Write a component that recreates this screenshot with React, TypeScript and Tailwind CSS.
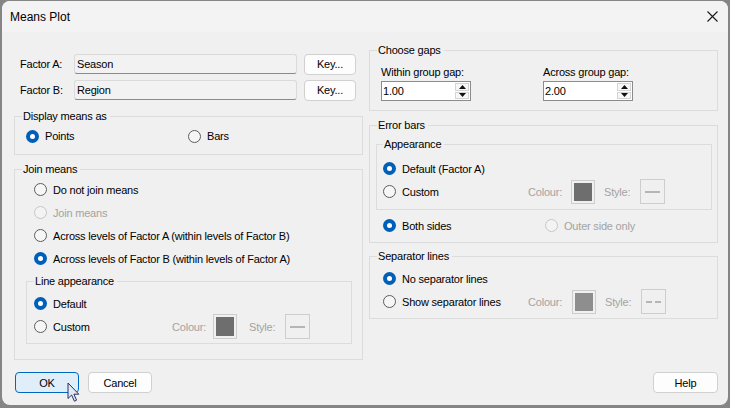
import React from "react";

function Radio({ checked = false, disabled = false }: { checked?: boolean; disabled?: boolean }) {
  if (checked) {
    return (
      <span className="w-[13px] h-[13px] shrink-0 rounded-full bg-[#005fb8] flex items-center justify-center">
        <span className="w-[5px] h-[5px] rounded-full bg-white" />
      </span>
    );
  }
  return (
    <span
      className={
        disabled
          ? "w-[13px] h-[13px] shrink-0 rounded-full border border-[#c6c6c6] bg-[#f3f3f3]"
          : "w-[13px] h-[13px] shrink-0 rounded-full border border-[#5c5c5c] bg-[#f6f6f6]"
      }
    />
  );
}

function RadioItem({
  label,
  checked = false,
  disabled = false,
  className = "",
}: {
  label: string;
  checked?: boolean;
  disabled?: boolean;
  className?: string;
}) {
  return (
    <div className={"flex items-center gap-[6px] " + className}>
      <Radio checked={checked} disabled={disabled} />
      <span className={disabled ? "text-[#a3a3a3]" : "text-black"}>{label}</span>
    </div>
  );
}

function Swatch({ color, h }: { color: string; h: string }) {
  return (
    <div className={"w-[24px] border border-[#cdcdcd] p-[2px] bg-[#f0f0f0] " + h}>
      <div className="w-full h-full" style={{ background: color }} />
    </div>
  );
}

function StyleBox({ dashed = false }: { dashed?: boolean }) {
  return (
    <div className="w-[25px] h-[25px] border border-[#cdcdcd] flex items-center justify-center">
      {dashed ? (
        <div className="flex gap-[3px]">
          <div className="w-[6px] h-[2px] bg-[#b5b5b5]" />
          <div className="w-[6px] h-[2px] bg-[#b5b5b5]" />
        </div>
      ) : (
        <div className="w-[15px] h-[2px] bg-[#b5b5b5]" />
      )}
    </div>
  );
}

function SpinBox({ value }: { value: string }) {
  return (
    <div className="w-[90px] h-[20px] border border-[#8c8c8c] bg-white flex">
      <div className="flex-1 pl-[1px] flex items-center">{value}</div>
      <div className="w-[15px] flex flex-col py-[1px] pr-[1px] gap-[1px]">
        <div className="flex-1 border border-[#d4d4d4] bg-[#f7f7f7] flex items-center justify-center">
          <svg width="7" height="4" viewBox="0 0 7 4">
            <path d="M0 4 L3.5 0 L7 4 Z" fill="#111" />
          </svg>
        </div>
        <div className="flex-1 border border-[#d4d4d4] bg-[#f7f7f7] flex items-center justify-center">
          <svg width="7" height="4" viewBox="0 0 7 4">
            <path d="M0 0 L3.5 4 L7 0 Z" fill="#111" />
          </svg>
        </div>
      </div>
    </div>
  );
}

function Legend({ children, ml = "ml-[7px]" }: { children: React.ReactNode; ml?: string }) {
  return <legend className={"px-[1px] pr-[3px] leading-[14px] " + ml}>{children}</legend>;
}

function Btn({ children, w = "w-[64px]", primary = false }: { children: React.ReactNode; w?: string; primary?: boolean }) {
  return (
    <div
      className={
        primary
          ? "h-[21px] rounded-[4px] border border-[#0067c0] bg-[#e0eef9] flex items-center justify-center " + w
          : "h-[21px] rounded-[4px] border border-[#d0d0d0] bg-[#fdfdfd] flex items-center justify-center " + w
      }
    >
      {children}
    </div>
  );
}

export default function App() {
  return (
    <div className="relative w-[730px] h-[408px] bg-[#858585] pt-[1px] pl-[2px] pr-[2px] pb-[3px] font-['Liberation_Sans',Arial,sans-serif] text-[11px] tracking-[-0.2px] leading-[14px] text-black">
      <div className="h-full rounded-[8px] bg-[#f0f0f0] overflow-hidden flex flex-col">
        {/* Title bar */}
        <div className="h-[31px] shrink-0 bg-[#f3f3f3] flex items-center justify-between pl-[8px] pr-[10px]">
          <span className="text-[12px] tracking-normal">Means Plot</span>
          <svg width="11" height="11" viewBox="0 0 11 11">
            <path d="M0.5 0.5 L10.5 10.5 M10.5 0.5 L0.5 10.5" stroke="#1a1a1a" strokeWidth="1.1" />
          </svg>
        </div>

        {/* Body */}
        <div className="flex-1 flex flex-col pl-[12px] pr-[10px]">
          <div className="flex gap-[6px]">
            {/* Left column */}
            <div className="w-[349px] pt-[22px] flex flex-col">
              <div className="flex flex-col gap-[6px] pl-[6px]">
                {[
                  ["Factor A:", "Season"],
                  ["Factor B:", "Region"],
                ].map(([l, v]) => (
                  <div key={l} className="flex items-center h-[20px]">
                    <span className="w-[54px]">{l}</span>
                    <div className="w-[223px] h-[20px] rounded-[3px] border border-[#dadada] border-b-[#8a8a8a] bg-[#f2f2f2] pl-[2px] flex items-center">
                      {v}
                    </div>
                    <div className="ml-[7px]">
                      <Btn w="w-[52px]">Key...</Btn>
                    </div>
                  </div>
                ))}
              </div>

              <fieldset className="mt-[9px] h-[46px] border border-[#dcdcdc] min-w-0">
                <Legend>Display means as</Legend>
                <div className="mt-[5px] h-[16px] pl-[11px] flex items-center">
                  <RadioItem label="Points" checked className="w-[162px]" />
                  <RadioItem label="Bars" />
                </div>
              </fieldset>

              <fieldset className="mt-[7px] h-[198px] border border-[#dcdcdc] min-w-0">
                <Legend>Join means</Legend>
                <div className="mt-[2px] flex flex-col pl-[19px]">
                  <RadioItem label="Do not join means" className="h-[23px]" />
                  <RadioItem label="Join means" disabled className="h-[23px]" />
                  <RadioItem label="Across levels of Factor A (within levels of Factor B)" className="h-[23px]" />
                  <RadioItem label="Across levels of Factor B (within levels of Factor A)" checked className="h-[23px]" />
                </div>
                <fieldset className="mt-[4px] ml-[11px] mr-[10px] h-[70px] border border-[#dcdcdc] min-w-0">
                  <Legend>Line appearance</Legend>
                  <div className="mt-[4px] flex flex-col pl-[7px]">
                    <RadioItem label="Default" checked className="h-[23px]" />
                    <div className="h-[23px] flex items-center">
                      <RadioItem label="Custom" className="w-[138px]" />
                      <span className="w-[41px] text-[#a3a3a3]">Colour:</span>
                      <Swatch color="#6e6e6e" h="h-[25px]" />
                      <span className="ml-[12px] w-[36px] text-[#a3a3a3]">Style:</span>
                      <StyleBox />
                    </div>
                  </div>
                </fieldset>
              </fieldset>
            </div>

            {/* Right column */}
            <div className="w-[349px] pt-[11px] flex flex-col">
              <fieldset className="h-[68px] border border-[#dcdcdc] min-w-0">
                <Legend>Choose gaps</Legend>
                <div className="mt-[8px] pl-[11px] flex">
                  <div className="w-[162px] flex flex-col gap-[2px]">
                    <span className="h-[14px]">Within group gap:</span>
                    <SpinBox value="1.00" />
                  </div>
                  <div className="flex flex-col gap-[2px]">
                    <span className="h-[14px]">Across group gap:</span>
                    <SpinBox value="2.00" />
                  </div>
                </div>
              </fieldset>

              <fieldset className="mt-[7px] h-[125px] border border-[#dcdcdc] min-w-0">
                <Legend>Error bars</Legend>
                <fieldset className="mt-[5px] ml-[6px] mr-[5px] h-[73px] border border-[#dcdcdc] min-w-0">
                  <Legend ml="ml-[6px]">Appearance</Legend>
                  <div className="mt-[6px] flex flex-col pl-[6px]">
                    <RadioItem label="Default (Factor A)" checked className="h-[23px]" />
                    <div className="h-[23px] flex items-center">
                      <RadioItem label="Custom" className="w-[145px]" />
                      <span className="w-[43px] text-[#a3a3a3]">Colour:</span>
                      <Swatch color="#6e6e6e" h="h-[24px]" />
                      <span className="ml-[9px] w-[36px] text-[#a3a3a3]">Style:</span>
                      <StyleBox />
                    </div>
                  </div>
                </fieldset>
                <div className="mt-[4px] h-[23px] pl-[13px] flex items-center">
                  <RadioItem label="Both sides" checked className="w-[162px]" />
                  <RadioItem label="Outer side only" disabled />
                </div>
              </fieldset>

              <fieldset className="mt-[6px] h-[70px] border border-[#dcdcdc] min-w-0">
                <Legend>Separator lines</Legend>
                <div className="mt-[4px] flex flex-col pl-[13px]">
                  <RadioItem label="No separator lines" checked className="h-[23px]" />
                  <div className="h-[23px] flex items-center">
                    <RadioItem label="Show separator lines" className="w-[145px]" />
                    <span className="w-[44px] text-[#a3a3a3]">Colour:</span>
                    <Swatch color="#8e8e8e" h="h-[24px]" />
                    <span className="ml-[9px] w-[36px] text-[#a3a3a3]">Style:</span>
                    <StyleBox dashed />
                  </div>
                </div>
              </fieldset>
            </div>
          </div>

          {/* Buttons */}
          <div className="mt-[12px] flex items-center justify-between pl-[1px]">
            <div className="flex gap-[9px]">
              <Btn primary>OK</Btn>
              <Btn>Cancel</Btn>
            </div>
            <Btn w="w-[65px]">Help</Btn>
          </div>
        </div>
      </div>

      {/* Mouse cursor */}
      <svg className="absolute left-[67px] top-[382px]" width="13" height="21" viewBox="0 0 13 21">
        <path
          d="M1 1 L1 16.5 L4.6 13 L7.4 19.2 L9.6 18.2 L6.9 12.2 L11.8 12.2 Z"
          fill="#dfe9f8"
          stroke="#26325e"
          strokeWidth="1"
          strokeLinejoin="round"
        />
      </svg>
    </div>
  );
}
